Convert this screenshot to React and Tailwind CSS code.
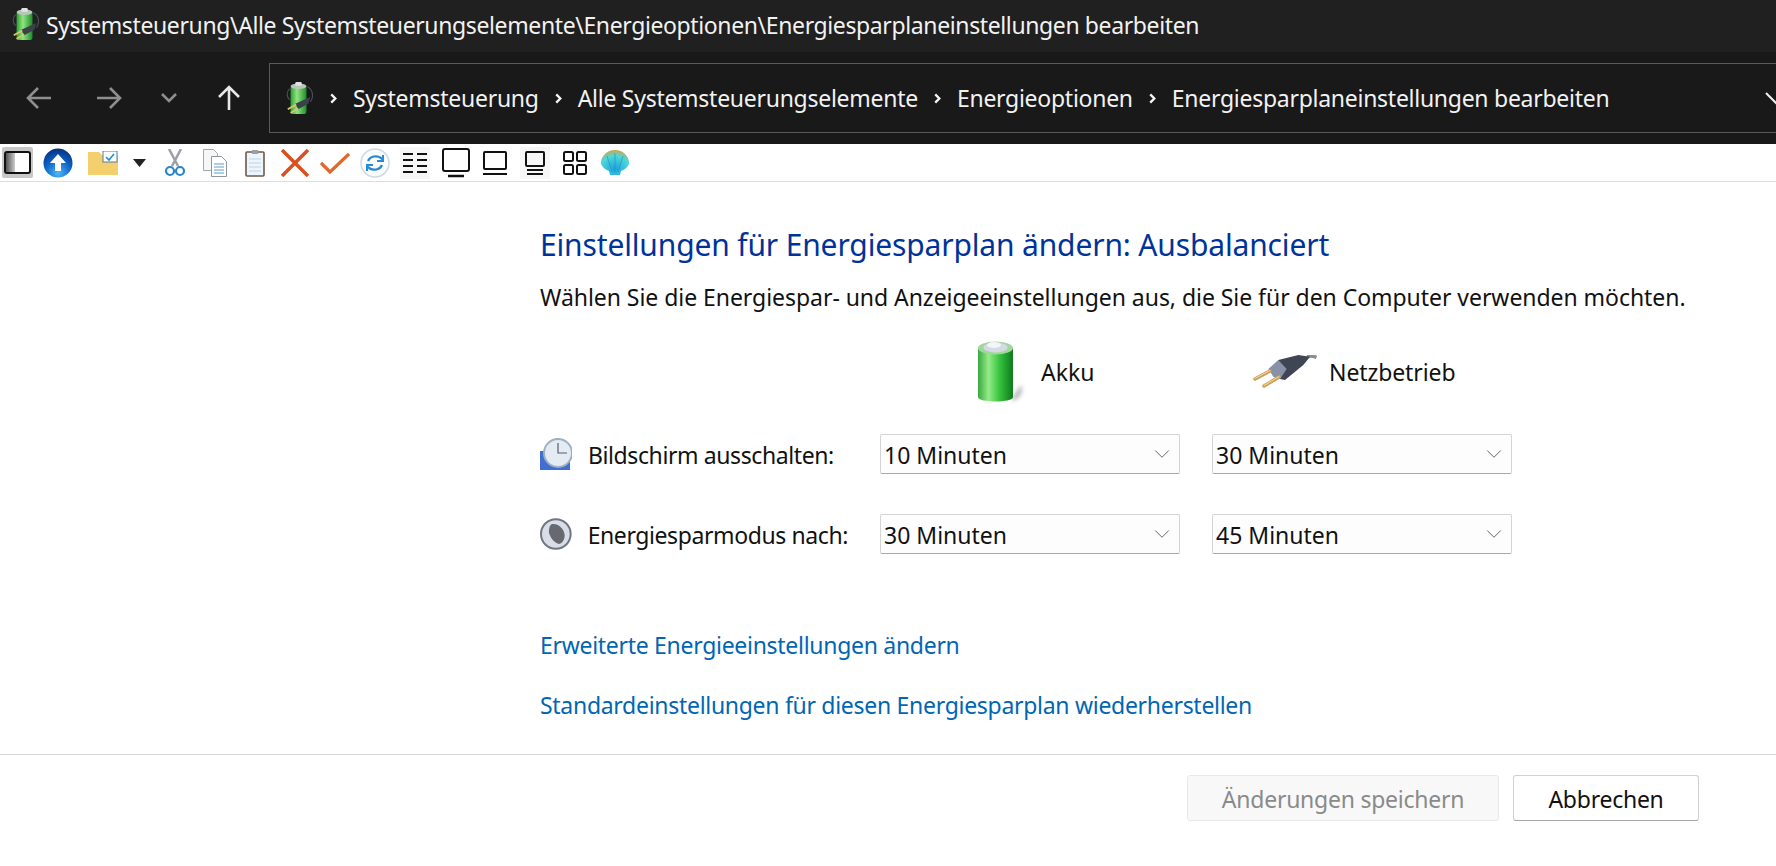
import { useId } from 'react';
import { ChevronDown } from 'lucide-react';

const TITLE = 'Systemsteuerung\\Alle Systemsteuerungselemente\\Energieoptionen\\Energiesparplaneinstellungen bearbeiten';
const CRUMBS = ['Systemsteuerung', 'Alle Systemsteuerungselemente', 'Energieoptionen', 'Energiesparplaneinstellungen bearbeiten'];

const PowerIcon = ({ className }) => {
  const id = useId();
  return (
    <svg viewBox="0 0 32 36" className={className}>
      <defs>
        <linearGradient id={id} x1="0" x2="1" y1="0" y2="0">
          <stop offset="0" stopColor="#2f9e36" />
          <stop offset="0.4" stopColor="#8fe67d" />
          <stop offset="1" stopColor="#1f8a2c" />
        </linearGradient>
      </defs>
      <path d="M6 8C2 12 3 17 6 20M25 6c6 3 7 11 3 16" fill="none" stroke="#4a5060" strokeWidth="1.200" />
      <rect x="7" y="5" width="17" height="30" rx="3" fill={`url(#${id})`} />
      <ellipse cx="15.500" cy="5.500" rx="8.500" ry="3" fill="#b9c6b9" />
      <rect x="12" y="1" width="7" height="4" rx="1.500" fill="#dfe5df" />
      <path d="M28 17 12 24l3 6 11-6z" fill="#3b4148" />
      <path d="M13 25 4 30M15 29l-8 5" stroke="#d6c46c" strokeWidth="2" />
    </svg>
  );
};

const BigBattery = () => {
  const id = useId();
  const blur = useId();
  return (
    <svg viewBox="0 0 48 64" className="w-12 h-16">
      <defs>
        <linearGradient id={id} x1="0" x2="1" y1="0" y2="0">
          <stop offset="0" stopColor="#3aa83f" />
          <stop offset="0.3" stopColor="#93ec88" />
          <stop offset="0.62" stopColor="#36c23d" />
          <stop offset="1" stopColor="#0e7a1c" />
        </linearGradient>
        <filter id={blur} x="-50%" y="-50%" width="200%" height="200%">
          <feGaussianBlur stdDeviation="2" />
        </filter>
      </defs>
      <path d="M34 58l9-13c3 6-1 14-9 16z" fill="#b5b8bc" filter={`url(#${blur})`} />
      <path d="M0 9c0-3 35-3 35 0v48c0 6-35 6-35 0z" fill={`url(#${id})`} />
      <ellipse cx="17.500" cy="8" rx="17.500" ry="6.500" fill="#a0d89c" />
      <ellipse cx="17.500" cy="7.500" rx="12" ry="5" fill="#d6d8e6" />
      <ellipse cx="16" cy="5" rx="7" ry="3" fill="#f4f4fa" />
    </svg>
  );
};

const Plug = () => (
  <svg viewBox="0 0 64 34" className="w-16 h-[34px]">
    <path d="M54 1.500c3-1 6-.5 9.500 1" fill="none" stroke="#8a8e94" strokeWidth="3.500" />
    <path d="M25.300 5 45.300 0 57 1.700 50.300 10 32 25l-5-1z" fill="#3f4553" />
    <path d="M15.300 14 25.300 5l8.400 9L27 24l-6.700-2.300z" fill="#8791a8" />
    <path d="M2 24 17 16M11 31l15-9" stroke="#c9a056" strokeWidth="3.500" strokeLinecap="round" />
    <path d="M2 23.500 17 15.500M11 30.500l15-9" stroke="#f0dca8" strokeWidth="1" strokeLinecap="round" />
  </svg>
);

const ClockIcon = () => (
  <svg viewBox="0 0 32 32" className="w-8 h-8">
    <path d="M0 13h8v2h22v17H0z" fill="#3f6fd0" />
    <circle cx="18" cy="15" r="14" fill="#e4ebf2" stroke="#9fb0c2" strokeWidth="2" />
    <path d="M18 5v10h9" fill="none" stroke="#55606c" strokeWidth="1.200" />
  </svg>
);

const SleepIcon = () => (
  <svg viewBox="0 0 32 32" className="w-8 h-8">
    <circle cx="16" cy="16" r="15" fill="#d9dde8" stroke="#6f7682" strokeWidth="2" />
    <path d="M12 6c6-1 12 4 13 11 0 5-3 9-6 9-5-1-9-7-10-12 0-4 1-7 3-8z" fill="#666a70" />
  </svg>
);

const Chevron = () => (
  <svg viewBox="0 0 10 14" className="w-[9px] h-[13px] shrink-0">
    <path d="M2.500 2.500 7 7l-4.500 4.500" fill="none" stroke="#f4f4f4" strokeWidth="2.600" />
  </svg>
);

const Combo = ({ value }) => (
  <div className="h-10 w-[300px] flex items-center justify-between pl-[3px] pr-[4px] bg-[#fdfdfd] border border-[#d4d4d4] border-b-[#a8a8a8] rounded-[2px]">
    <span className="pt-[2px]">{value}</span>
    <ChevronDown className="w-[26px] h-[26px] text-[#666]" strokeWidth={0.9} />
  </div>
);

const NavArrow = ({ d, color, className }) => (
  <svg viewBox="0 0 30 30" className={className}>
    <path d={d} fill="none" stroke={color} strokeWidth="2.600" />
  </svg>
);

const Toolbar = () => (
  <div className="h-[38px] flex items-center bg-white border-b border-[#dddddd]">
    {/* panel toggle, selected */}
    <div className="ml-[2px] w-[31px] h-[31px] bg-[#c8c8c8] rounded-[2px] flex items-center justify-center">
      <svg viewBox="0 0 27 23" className="w-[27px] h-[23px]">
        <defs>
          <linearGradient id="pane" x1="0" x2="1" y1="0" y2="0">
            <stop offset="0" stopColor="#555" />
            <stop offset="1" stopColor="#ccc" />
          </linearGradient>
        </defs>
        <rect x="1" y="1" width="25" height="21" rx="2" fill="#fff" stroke="#111" strokeWidth="2" />
        <rect x="2" y="2" width="9" height="19" fill="url(#pane)" />
      </svg>
    </div>
    {/* up */}
    <svg viewBox="0 0 30 30" className="ml-[10px] w-[30px] h-[30px]">
      <defs>
        <radialGradient id="up" cx="0.5" cy="0.85" r="0.85">
          <stop offset="0" stopColor="#4db8f8" />
          <stop offset="0.55" stopColor="#0b62c4" />
          <stop offset="1" stopColor="#07307f" />
        </radialGradient>
      </defs>
      <circle cx="15" cy="15" r="14.500" fill="url(#up)" />
      <path d="M15 6 23 15h-5v8h-6v-8H7z" fill="#fff" />
    </svg>
    {/* folder */}
    <svg viewBox="0 0 30 24" className="ml-[15px] w-[30px] h-6">
      <path d="M0 1h11l3 3h16v20H0z" fill="#f4cf6e" />
      <rect x="15" y="0" width="14" height="11" fill="#fff" stroke="#5a7a9a" />
      <path d="M18 6l3 3 5-6" fill="none" stroke="#1f8fd8" strokeWidth="1.600" />
    </svg>
    <svg viewBox="0 0 13 8" className="ml-[15px] w-[13px] h-2">
      <path d="M0 0h13L6.500 8z" fill="#222" />
    </svg>
    {/* cut */}
    <svg viewBox="0 0 20 28" className="ml-[19px] w-5 h-7">
      <path d="M4 0l9 17M16 0 7 17" stroke="#9aa0a6" strokeWidth="2.500" />
      <circle cx="5" cy="22" r="4" fill="none" stroke="#2a86c8" strokeWidth="2.200" />
      <circle cx="15" cy="22" r="4" fill="none" stroke="#2a86c8" strokeWidth="2.200" />
    </svg>
    {/* copy */}
    <svg viewBox="0 0 24 28" className="ml-[18px] w-6 h-7">
      <path d="M.5.5h10l4 4v17H.5z" fill="#f4f6f8" stroke="#a0a8b0" />
      <path d="M8.500 7.500h10l5 5v15h-15z" fill="#fff" stroke="#8a98a4" />
      <path d="M11 15h10M11 18h10M11 21h10M11 24h10" stroke="#5f9cc8" />
    </svg>
    {/* paste */}
    <svg viewBox="0 0 20 28" className="ml-[18px] w-5 h-7">
      <rect x="1" y="3" width="18" height="24" rx="1" fill="#eef4fa" stroke="#6a5a4a" strokeWidth="1.600" />
      <path d="M4 10h12M4 14h12M4 18h12M4 22h12" stroke="#b8d4ea" />
      <rect x="7" y="1" width="6" height="4" fill="#9aa0a6" />
    </svg>
    {/* delete */}
    <svg viewBox="0 0 28 28" className="ml-[16px] w-7 h-7">
      <path d="M1 1l26 26M27 1 1 27" stroke="#d9501e" strokeWidth="3.500" />
    </svg>
    {/* accept */}
    <svg viewBox="0 0 30 22" className="ml-[11px] w-[30px] h-[22px]">
      <path d="M1 11l9 9L29 2" fill="none" stroke="#e0662a" strokeWidth="3.200" />
    </svg>
    {/* refresh */}
    <svg viewBox="0 0 30 30" className="ml-[10px] w-[30px] h-[30px]">
      <circle cx="15" cy="15" r="14" fill="#fafcfe" stroke="#cfd8e4" strokeWidth="1.500" />
      <path d="M8 13c2-5 9-6 13-3l2 2M22 17c-2 5-9 6-13 3l-2-2" fill="none" stroke="#2a8ad0" strokeWidth="2.200" />
      <path d="M23 7v6h-6M7 23v-6h6" fill="none" stroke="#2a8ad0" strokeWidth="2" />
    </svg>
    {/* view buttons */}
    <div className="ml-[10px] w-[30px] h-[32px] bg-[#f6f6f6] flex items-center justify-center">
      <svg viewBox="0 0 24 20" className="w-6 h-5">
        <path d="M0 1h10M14 1h10M0 7h10M14 7h10M0 13h10M14 13h10M0 19h10M14 19h10" stroke="#111" strokeWidth="2" />
      </svg>
    </div>
    <svg viewBox="0 0 28 30" className="ml-[12px] w-7 h-[30px]">
      <rect x="1" y="1" width="26" height="22" rx="2" fill="none" stroke="#111" strokeWidth="2" />
      <path d="M6 28h16" stroke="#111" strokeWidth="2.500" />
    </svg>
    <div className="ml-[10px] w-[30px] h-[32px] flex items-center justify-center">
      <svg viewBox="0 0 24 24" className="w-6 h-6">
        <rect x="1" y="1" width="22" height="17" rx="1" fill="none" stroke="#111" strokeWidth="2" />
        <path d="M0 23h24" stroke="#111" strokeWidth="2" />
      </svg>
    </div>
    <div className="ml-[10px] w-[30px] h-[32px] bg-[#f6f6f6] flex items-center justify-center">
      <svg viewBox="0 0 20 24" className="w-5 h-6">
        <rect x="1" y="1" width="18" height="14" rx="1" fill="none" stroke="#111" strokeWidth="2" />
        <path d="M2 19h16M2 23h16" stroke="#111" strokeWidth="2" />
      </svg>
    </div>
    <svg viewBox="0 0 24 24" className="ml-[13px] w-6 h-6">
      <rect x="1" y="1" width="9" height="9" rx="1.500" fill="none" stroke="#111" strokeWidth="2" />
      <rect x="14" y="1" width="9" height="9" rx="1.500" fill="none" stroke="#111" strokeWidth="2" />
      <rect x="1" y="14" width="9" height="9" rx="1.500" fill="none" stroke="#111" strokeWidth="2" />
      <rect x="14" y="14" width="9" height="9" rx="1.500" fill="none" stroke="#111" strokeWidth="2" />
    </svg>
    {/* shell */}
    <svg viewBox="0 0 30 26" className="ml-[13px] w-[30px] h-[26px]">
      <defs>
        <radialGradient id="shell" cx="0.5" cy="0.75" r="0.75">
          <stop offset="0" stopColor="#1aa4e0" />
          <stop offset="0.7" stopColor="#4fd8d8" />
          <stop offset="1" stopColor="#cfa64a" />
        </radialGradient>
      </defs>
      <path d="M15 0C6 0 0 8 1 14c2 4 5 6 8 7l1 4h10l1-4c3-1 6-3 8-7C30 8 24 0 15 0z" fill="url(#shell)" />
      <path d="M15 22V3M12 22 7 6M18 22l5-16" stroke="#2b93b8" strokeWidth="0.700" fill="none" />
    </svg>
  </div>
);

export default function App() {
  return (
    <div className="h-[866px] w-[1776px] overflow-hidden bg-white text-[#111] font-['Noto_Sans',sans-serif] text-[23px] leading-none">
      {/* title bar */}
      <div className="h-[52px] bg-[#202020] text-[#f2f2f2] flex items-center pl-[10px]">
        <PowerIcon className="w-[30px] h-[34px] -mt-[4px]" />
        <span className="ml-[6px] tracking-[-0.38px] -mt-[1px] whitespace-nowrap">{TITLE}</span>
      </div>

      {/* address row */}
      <div className="h-[92px] bg-[#191919] flex items-center">
        <NavArrow d="M27 15H4M14 5 4 15l10 10" color="#8f8f8f" className="ml-[24px] w-[30px] h-[30px]" />
        <NavArrow d="M3 15h23M16 5l10 10-10 10" color="#8f8f8f" className="ml-[40px] w-[30px] h-[30px]" />
        <NavArrow d="M8 11l7 7 7-7" color="#8f8f8f" className="ml-[30px] w-[30px] h-[30px]" />
        <NavArrow d="M15 27V4M5 14 15 4l10 10" color="#e8e8e8" className="ml-[30px] w-[30px] h-[30px]" />
        <div className="ml-[25px] flex-1 h-[70px] border border-[#5a5a5a] border-r-0 flex items-center pl-[14px] text-[#f2f2f2] overflow-hidden whitespace-nowrap">
          <PowerIcon className="w-[30px] h-[34px] shrink-0" />
          <span className="w-[15px] shrink-0" />
          <Chevron />
          {CRUMBS.map((c, i) => (
            <div key={c} className="flex items-center">
              <span className="ml-[15px] tracking-[-0.27px]">{c}</span>
              {i < CRUMBS.length - 1 && <span className="ml-[15px]"><Chevron /></span>}
            </div>
          ))}
          <svg viewBox="0 0 20 20" className="ml-auto w-5 h-5 shrink-0 -mr-[8px]">
            <path d="M2 5l11 11" fill="none" stroke="#f0f0f0" strokeWidth="2" />
          </svg>
        </div>
      </div>

      <Toolbar />

      {/* content */}
      <div className="pl-[540px] pt-[45px]">
        <h1 className="text-[#003399] text-[30px] leading-[36px] tracking-[-0.15px] whitespace-nowrap">
          Einstellungen für Energiesparplan ändern: Ausbalanciert
        </h1>
        <p className="mt-[18px] whitespace-nowrap leading-[32px] tracking-[-0.045px]">
          Wählen Sie die Energiespar- und Anzeigeeinstellungen aus, die Sie für den Computer verwenden möchten.
        </p>

        <div className="mt-[26px] grid grid-cols-[308px_300px_300px] gap-x-[32px]">
          <div />
          <div className="h-[66px] flex items-center pl-[98px]">
            <BigBattery />
            <span className="ml-[15px]">Akku</span>
          </div>
          <div className="h-[66px] flex items-center pl-[41px]">
            <Plug />
            <span className="ml-[12px] tracking-[-0.1px]">Netzbetrieb</span>
          </div>
        </div>

        <div className="mt-[29px] grid grid-cols-[308px_300px_300px] gap-x-[32px] gap-y-[40px] items-center">
          <div className="flex items-center whitespace-nowrap">
            <ClockIcon />
            <span className="ml-[16px] pt-[2px] tracking-[-0.4px]">Bildschirm ausschalten:</span>
          </div>
          <Combo value="10 Minuten" />
          <Combo value="30 Minuten" />
          <div className="flex items-center whitespace-nowrap">
            <SleepIcon />
            <span className="ml-[16px] pt-[2px] tracking-[-0.4px]">Energiesparmodus nach:</span>
          </div>
          <Combo value="30 Minuten" />
          <Combo value="45 Minuten" />
        </div>

        <div className="mt-[75px] text-[#0066b4] leading-[32px] tracking-[-0.29px]">Erweiterte Energieeinstellungen ändern</div>
        <div className="mt-[28px] text-[#0066b4] leading-[32px] tracking-[-0.29px]">Standardeinstellungen für diesen Energiesparplan wiederherstellen</div>
      </div>

      {/* footer */}
      <div className="mt-[33px] border-t border-[#d8d8d8] pt-[20px] pr-[77px] flex justify-end gap-[14px]">
        <div className="w-[312px] h-[46px] pt-[2px] bg-[#f8f8f8] border border-[#e8e8e8] rounded-[3px] text-[#8a8a8a] tracking-[-0.25px] flex items-center justify-center">
          Änderungen speichern
        </div>
        <div className="w-[186px] h-[46px] pt-[2px] bg-white border border-[#d0d0d0] border-b-[#a8a8a8] rounded-[3px] tracking-[-0.25px] flex items-center justify-center">
          Abbrechen
        </div>
      </div>
    </div>
  );
}
